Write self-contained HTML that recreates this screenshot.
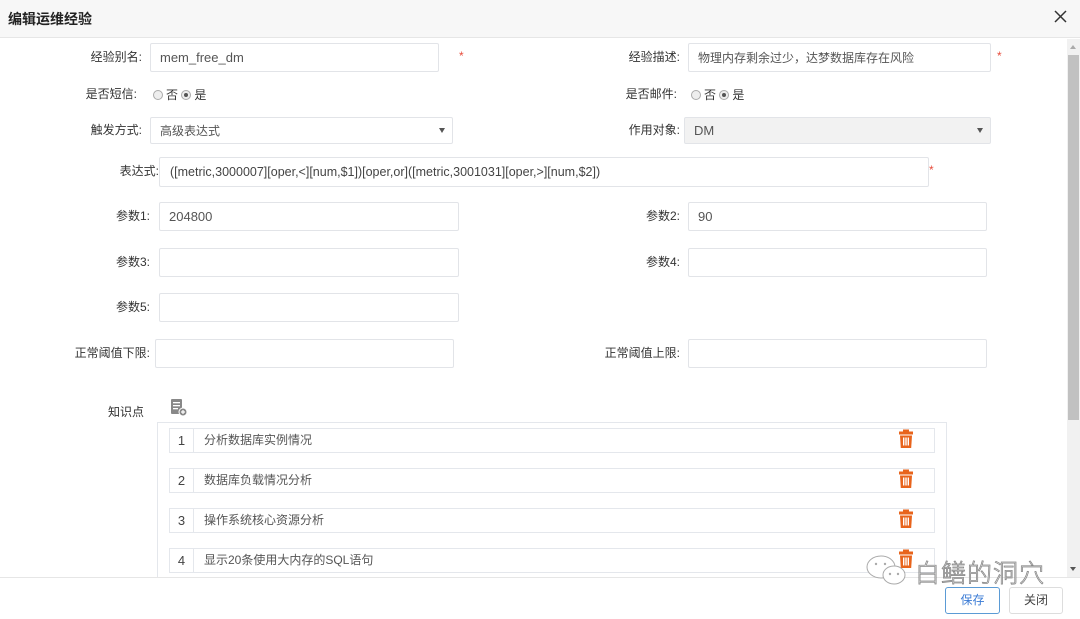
<!DOCTYPE html>
<html><head><meta charset="utf-8"><style>
*{box-sizing:border-box;margin:0;padding:0}
body{width:1080px;height:619px;overflow:hidden;background:#fff;position:relative;font-family:"Liberation Sans","Noto Sans CJK SC",sans-serif;font-size:12px;color:#333}
.a{position:absolute}
.lbl{position:absolute;text-align:right;font-size:12px;color:#333;line-height:16px}
.in{position:absolute;border:1px solid #e2e4e8;border-radius:2px;background:#fff;font-size:13px;color:#555;padding-left:9px;display:flex;align-items:center}
.star{position:absolute;color:#e74c3c;font-size:12px}
.rad{display:inline-block;width:10px;height:10px;border:1px solid #aaa;border-radius:50%;background:#eee;vertical-align:-1px;margin-right:3px;position:relative}
.rad.on::after{content:"";position:absolute;left:2px;top:2px;width:4px;height:4px;border-radius:50%;background:#555}
.arr{position:absolute;right:7px;top:10px;width:0;height:0;border-left:3px solid transparent;border-right:3px solid transparent;border-top:5px solid #555}
.item{position:absolute;left:169px;width:766px;height:25px;border:1px solid #e4e7ec;background:#fff}
.item .n{position:absolute;left:0;top:0;width:24px;height:23px;border-right:1px solid #e4e7ec;text-align:center;line-height:23px;font-size:13px;color:#444}
.item .t{position:absolute;left:34px;top:0;line-height:23px;font-size:12px;color:#555}
</style></head><body>
<div class="a" style="left:0;top:0;width:1080px;height:38px;background:#f7f7f7;border-bottom:1px solid #e6e6e6"></div>
<div class="a" style="left:8px;top:9px;font-size:14px;font-weight:bold;color:#222">编辑运维经验</div>
<svg class="a" style="left:1054px;top:10px" width="13" height="13"><path d="M1 1L12 12M12 1L1 12" stroke="#333" stroke-width="1.5"/></svg>

<div class="a" style="left:1067px;top:39px;width:13px;height:538px;background:#f1f1f1"></div>
<div class="a" style="left:1068px;top:55px;width:11px;height:365px;background:#c1c1c1"></div>
<div class="a" style="left:1070px;top:45px;border-left:3px solid transparent;border-right:3px solid transparent;border-bottom:4px solid #aaa"></div>
<div class="a" style="left:1070px;top:567px;border-left:3px solid transparent;border-right:3px solid transparent;border-top:4px solid #555"></div>

<div class="lbl" style="left:60px;width:82px;top:49px">经验别名:</div>
<div class="in" style="left:150px;top:43px;width:289px;height:29px">mem_free_dm</div>
<div class="star" style="left:459px;top:49px">*</div>
<div class="lbl" style="left:580px;width:100px;top:49px">经验描述:</div>
<div class="in" style="left:688px;top:43px;width:303px;height:29px;font-size:12px">物理内存剩余过少，达梦数据库存在风险</div>
<div class="star" style="left:997px;top:49px">*</div>

<div class="lbl" style="left:40px;width:97px;top:86px">是否短信:</div>
<div class="a" style="left:153px;top:86px;font-size:12px"><span class="rad"></span>否 <span class="rad on"></span>是</div>
<div class="lbl" style="left:580px;width:97px;top:86px">是否邮件:</div>
<div class="a" style="left:691px;top:86px;font-size:12px"><span class="rad"></span>否 <span class="rad on"></span>是</div>

<div class="lbl" style="left:60px;width:82px;top:122px">触发方式:</div>
<div class="in" style="left:150px;top:117px;width:303px;height:27px;font-size:12px">高级表达式<div class="arr"></div></div>
<div class="lbl" style="left:580px;width:100px;top:122px">作用对象:</div>
<div class="in" style="left:684px;top:117px;width:307px;height:27px;background:#f2f2f2">DM<div class="arr"></div></div>

<div class="lbl" style="left:80px;width:79px;top:163px">表达式:</div>
<div class="in" style="left:159px;top:157px;width:770px;height:30px;font-size:12.5px;color:#444;padding-left:10px">([metric,3000007][oper,&lt;][num,$1])[oper,or]([metric,3001031][oper,&gt;][num,$2])</div>
<div class="star" style="left:929px;top:163px">*</div>

<div class="lbl" style="left:80px;width:70px;top:208px">参数1:</div>
<div class="in" style="left:159px;top:202px;width:300px;height:29px">204800</div>
<div class="lbl" style="left:600px;width:80px;top:208px">参数2:</div>
<div class="in" style="left:688px;top:202px;width:299px;height:29px">90</div>
<div class="lbl" style="left:80px;width:70px;top:254px">参数3:</div>
<div class="in" style="left:159px;top:248px;width:300px;height:29px"></div>
<div class="lbl" style="left:600px;width:80px;top:254px">参数4:</div>
<div class="in" style="left:688px;top:248px;width:299px;height:29px"></div>
<div class="lbl" style="left:80px;width:70px;top:299px">参数5:</div>
<div class="in" style="left:159px;top:293px;width:300px;height:29px"></div>
<div class="lbl" style="left:50px;width:100px;top:345px">正常阈值下限:</div>
<div class="in" style="left:155px;top:339px;width:299px;height:29px"></div>
<div class="lbl" style="left:570px;width:110px;top:345px">正常阈值上限:</div>
<div class="in" style="left:688px;top:339px;width:299px;height:29px"></div>

<div class="lbl" style="left:90px;width:54px;top:404px">知识点</div>
<svg class="a" style="left:170px;top:399px" width="18" height="18" viewBox="0 0 18 18"><rect x="1" y="0" width="11" height="15" rx="1" fill="#888"/><rect x="3" y="3" width="7" height="1.3" fill="#fff"/><rect x="3" y="6" width="7" height="1.3" fill="#fff"/><rect x="3" y="9" width="5" height="1.3" fill="#fff"/><circle cx="13" cy="13" r="4" fill="#888" stroke="#fff" stroke-width="1"/><path d="M13 11v4M11 13h4" stroke="#fff" stroke-width="1.2"/></svg>

<div class="a" style="left:157px;top:422px;width:790px;height:156px;border:1px solid #e4e7ec;border-bottom:none"></div>
<div class="item" style="top:428px"><div class="n">1</div><div class="t">分析数据库实例情况</div></div>
<div class="item" style="top:468px"><div class="n">2</div><div class="t">数据库负载情况分析</div></div>
<div class="item" style="top:508px"><div class="n">3</div><div class="t">操作系统核心资源分析</div></div>
<div class="item" style="top:548px"><div class="n">4</div><div class="t">显示20条使用大内存的SQL语句</div></div>

<svg width="0" height="0" style="position:absolute"><defs><g id="tr"><rect x="4" y="0.5" width="6" height="2" fill="#e8641c"/><rect x="0" y="2.5" width="14" height="3" fill="#e8641c"/><path d="M1 6.5h12l-0.8 12.5h-10.4z" fill="#e8641c"/><rect x="4" y="8.5" width="1.4" height="8" fill="#fff"/><rect x="6.3" y="8.5" width="1.4" height="8" fill="#fff"/><rect x="8.6" y="8.5" width="1.4" height="8" fill="#fff"/></g></defs></svg>
<svg class="a" style="left:899px;top:429px" width="14" height="20"><use href="#tr"/></svg>
<svg class="a" style="left:899px;top:469px" width="14" height="20"><use href="#tr"/></svg>
<svg class="a" style="left:899px;top:509px" width="14" height="20"><use href="#tr"/></svg>
<svg class="a" style="left:899px;top:549px" width="14" height="20"><use href="#tr"/></svg>

<div class="a" style="left:0;top:577px;width:1080px;height:1px;background:#e6e6e6"></div>

<svg class="a" style="left:865px;top:553px" width="45" height="34"><g fill="#fff" stroke="#aaa" stroke-width="1"><ellipse cx="16" cy="14" rx="14" ry="11"/><ellipse cx="29" cy="22" rx="11" ry="9"/></g><g fill="#aaa"><circle cx="11" cy="11" r="1.2"/><circle cx="20" cy="11" r="1.2"/><circle cx="25" cy="21" r="1.2"/><circle cx="33" cy="21" r="1.2"/></g></svg>
<div class="a" style="left:915px;top:554px;font-size:25px;color:#fff;-webkit-text-stroke:0.8px #888;letter-spacing:1px;font-family:'Noto Sans CJK SC',sans-serif;font-weight:300">白鳝的洞穴</div>

<div class="a" style="left:945px;top:587px;width:55px;height:27px;border:1px solid #5b9bd5;border-radius:3px;color:#3a7bd5;text-align:center;line-height:25px;font-size:12px">保存</div>
<div class="a" style="left:1009px;top:587px;width:54px;height:27px;border:1px solid #ddd;border-radius:3px;color:#444;text-align:center;line-height:25px;font-size:12px">关闭</div>
</body></html>
